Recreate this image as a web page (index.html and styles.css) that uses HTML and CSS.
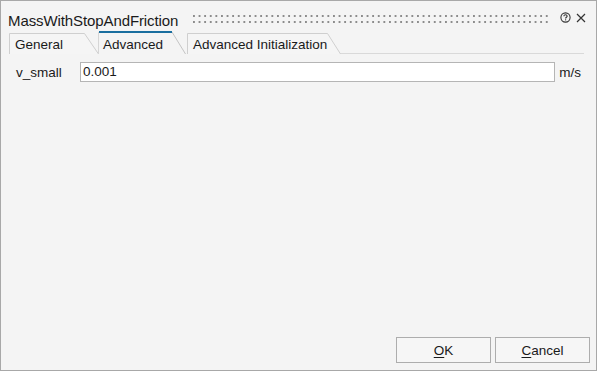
FILE: index.html
```html
<!DOCTYPE html>
<html>
<head>
<meta charset="utf-8">
<link rel="stylesheet" href="styles.css">
</head>
<body>
<div class="window">
  <div class="titlebar">
    <div class="title">MassWithStopAndFriction</div>
    <svg class="grip" height="10" preserveAspectRatio="none" shape-rendering="crispEdges">
      <defs>
        <pattern id="dots" x="0" y="0" width="5.6" height="6" patternUnits="userSpaceOnUse">
          <rect x="0" y="0" width="1.5" height="1.5" fill="#8c8c8c"/>
        </pattern>
      </defs>
      <rect x="0" y="0" width="100%" height="10" fill="url(#dots)"/>
    </svg>
    <svg class="icon help" width="11" height="11" viewBox="0 0 11 11">
      <circle cx="5.5" cy="5.5" r="4.6" fill="none" stroke="#333" stroke-width="1.1"/>
      <path d="M3.9 4.3 C3.9 3.3 4.6 2.8 5.5 2.8 C6.4 2.8 7.1 3.4 7.1 4.2 C7.1 5.2 5.6 5.3 5.6 6.4" fill="none" stroke="#333" stroke-width="1.1"/>
      <rect x="5.05" y="7.3" width="1.1" height="1.1" fill="#333"/>
    </svg>
    <svg class="icon close" width="10" height="10" viewBox="0 0 10 10">
      <path d="M1 1 L9 9 M9 1 L1 9" stroke="#333" stroke-width="1.2"/>
    </svg>
  </div>
  <div class="tabs">
    <div class="tab tab-general">
      <svg class="tab-bg" width="90" height="22" viewBox="0 0 90 22">
        <polyline points="0.5,22 0.5,1.5 75.5,1.5 89.5,22" fill="#f5f5f5" stroke="#cfcfcf"/>
      </svg>
      <span class="tab-label">General</span>
    </div>
    <div class="tab tab-advanced active">
      <svg class="tab-bg" width="88" height="23" viewBox="0 0 88 23">
        <polygon points="0,23 0,0 74,0 87.5,23" fill="#f4f4f4"/>
        <polyline points="0.5,23 0.5,1" fill="none" stroke="#d6d6d6"/>
        <polyline points="74,1 87.5,23" fill="none" stroke="#c4c4c4"/>
        <rect x="1" y="0" width="73" height="2" fill="#1a6e9f"/>
      </svg>
      <span class="tab-label">Advanced</span>
    </div>
    <div class="tab tab-init">
      <svg class="tab-bg" width="154" height="22" viewBox="0 0 154 22">
        <polyline points="0.5,22 0.5,1.5 140.5,1.5 153.5,22" fill="#f5f5f5" stroke="#cfcfcf"/>
      </svg>
      <span class="tab-label">Advanced Initialization</span>
    </div>
    <div class="tab-fill"></div>
  </div>
  <div class="content">
    <div class="param-row">
      <label class="param-label">v_small</label>
      <div class="param-input">0.001</div>
      <span class="param-unit">m/s</span>
    </div>
  </div>
  <div class="buttons">
    <button class="btn"><u>O</u>K</button>
    <button class="btn"><u>C</u>ancel</button>
  </div>
</div>
</body>
</html>
```

FILE: styles.css
```css
html, body {
  margin: 0;
  padding: 0;
}
body {
  font-family: "Liberation Sans", Arial, sans-serif;
  color: #1a1a1a;
}
.window {
  box-sizing: border-box;
  width: 597px;
  height: 371px;
  border: 1px solid #a8a8a8;
  background: #f4f4f4;
  display: flex;
  flex-direction: column;
}
.titlebar {
  display: flex;
  align-items: flex-start;
  height: 30px;
  padding: 11px 0 0 7px;
  box-sizing: border-box;
}
.title {
  font-size: 15px;
  line-height: 17px;
  color: #1a1a1a;
  letter-spacing: -0.1px;
}
.grip {
  flex: 1;
  margin: 3px 0 0 15px;
  height: 10px;
}
.icon {
  flex: none;
}
.help {
  margin: 0 0 0 10px;
}
.close {
  margin: 1px 10px 0 5px;
}
.tabs {
  display: flex;
  align-items: flex-end;
  height: 23px;
  padding-left: 8px;
}
.tab {
  position: relative;
  height: 22px;
  box-sizing: border-box;
  border-bottom: 1px solid #d9d9d9;
  flex: none;
}
.tab-general {
  width: 90px;
}
.tab-advanced {
  width: 88px;
  height: 23px;
  margin-left: -1px;
  border-bottom: none;
}
.tab-init {
  width: 154px;
  margin-left: 1px;
}
.tab-bg {
  position: absolute;
  left: 0;
  top: 0;
}
.tab-label {
  position: relative;
  display: block;
  font-size: 13.5px;
  line-height: 15px;
  padding: 5px 0 0 6px;
  white-space: nowrap;
}
.tab-advanced .tab-label {
  padding-top: 6px;
  padding-left: 5px;
}
.tab-fill {
  flex: 1;
  margin-right: 12px;
  border-bottom: 1px solid #d9d9d9;
}
.content {
  flex: 1;
  padding: 8px 15px 0 15px;
}
.param-row {
  display: grid;
  grid-template-columns: 60px 1fr auto;
  align-items: center;
  column-gap: 4px;
}
.param-label {
  font-size: 13.5px;
  line-height: 15px;
}
.param-input {
  height: 20px;
  box-sizing: border-box;
  border: 1px solid #b5b5b5;
  background: #ffffff;
  font-size: 13.5px;
  line-height: 18px;
  padding-left: 2px;
}
.param-unit {
  font-size: 13.5px;
  line-height: 15px;
}
.buttons {
  display: flex;
  justify-content: flex-end;
  gap: 4px;
  padding: 0 6px 7px 0;
}
.btn {
  width: 95px;
  height: 26px;
  box-sizing: border-box;
  border: 1px solid #adadad;
  background: #f6f6f6;
  font-family: "Liberation Sans", Arial, sans-serif;
  font-size: 13.5px;
  color: #1a1a1a;
  padding: 0;
}
.btn u {
  text-decoration-thickness: 1px;
  text-underline-offset: 2px;
}
```
